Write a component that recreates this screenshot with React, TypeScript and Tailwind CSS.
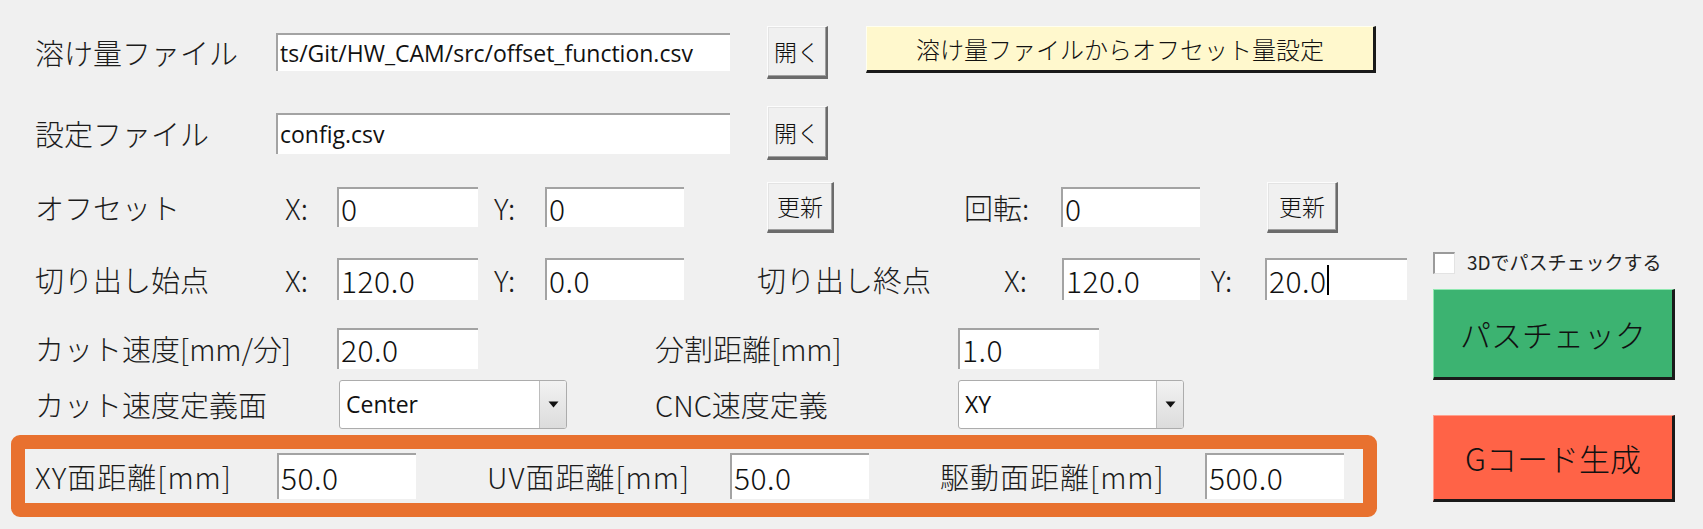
import React from "react";

const JP = { fontFamily: '"Noto Sans CJK JP", "Noto Sans", sans-serif' };
const UI = { fontFamily: '"Open Sans", "Noto Sans CJK JP", sans-serif' };

function Label({ children, className = "" }: { children: React.ReactNode; className?: string }) {
  return (
    <div className={`shrink-0 text-[29px] leading-none text-[#1c1c1c] whitespace-nowrap font-light ${className}`} style={JP}>
      {children}
    </div>
  );
}

function Field({
  value,
  className = "",
  ui = false,
  caret = false,
}: {
  value: string;
  className?: string;
  ui?: boolean;
  caret?: boolean;
}) {
  return (
    <div
      className={`shrink-0 bg-white border-t-2 border-l-2 border-t-[#a3a3a3] border-l-[#a3a3a3] flex items-center pl-[2px] whitespace-nowrap text-[#111] ${
        ui ? "text-[23px]" : "text-[30px] font-light tracking-[0.5px]"
      } ${className}`}
      style={ui ? UI : JP}
    >
      <span className="leading-[1.15]">{value}</span>
      {caret && <span className="inline-block w-[2px] h-[30px] bg-black" />}
    </div>
  );
}

function Btn({ children, className = "" }: { children: React.ReactNode; className?: string }) {
  return (
    <div
      className={`shrink-0 bg-[#f0f0f0] border-t border-l border-t-[#fcfcfc] border-l-[#fcfcfc] border-r-2 border-b-[3px] border-r-[#6b6b6b] border-b-[#6b6b6b] shadow-[inset_-1px_-1px_0_#a0a0a0,inset_1px_1px_0_#e3e3e3] flex items-center justify-center text-[23px] text-[#111] leading-none font-light ${className}`}
      style={JP}
    >
      {children}
    </div>
  );
}

function Select({ value, className = "" }: { value: string; className?: string }) {
  return (
    <div
      className={`shrink-0 bg-white border border-[#acacac] rounded-[3px] flex items-stretch ${className}`}
    >
      <div className="flex-1 flex items-center pl-[6px] text-[23px] text-[#111] leading-[1.2]" style={UI}>
        {value}
      </div>
      <div className="w-[27px] border-l border-[#bdbdbd] rounded-r-[2px] bg-gradient-to-b from-[#f2f2f2] to-[#dcdcdc] flex items-center justify-center">
        <svg width="11" height="7" viewBox="0 0 11 7">
          <path d="M0.5 0.5 H10.5 L5.5 6.5 Z" fill="#111" />
        </svg>
      </div>
    </div>
  );
}

export default function App() {
  return (
    <div className="w-[1703px] h-[529px] bg-[#f0f0f0] flex overflow-hidden">
      {/* left column */}
      <div className="w-[1420px] shrink-0 flex flex-col pt-[25px]">
        {/* row 1 */}
        <div className="flex items-center h-[54px]">
          <Label className="ml-[35px] w-[241px]">溶け量ファイル</Label>
          <Field ui value="ts/Git/HW_CAM/src/offset_function.csv" className="w-[454px] h-[38px]" />
          <Btn className="ml-[37px] w-[61px] h-[53px]">開く</Btn>
          <div
            className="ml-[38px] self-start mt-[1px] w-[510px] h-[47px] bg-[#fff8cd] border-t border-l border-t-[#fffff0] border-l-[#fffff0] border-r-[3px] border-b-[3px] border-r-[#1a1a1a] border-b-[#1a1a1a] flex items-center justify-center text-[24px] leading-none text-[#111] font-light"
            style={JP}
          >
            溶け量ファイルからオフセット量設定
          </div>
        </div>

        {/* row 2 */}
        <div className="flex items-center h-[54px] mt-[27px]">
          <Label className="ml-[35px] w-[241px]">設定ファイル</Label>
          <Field ui value="config.csv" className="w-[454px] h-[41px]" />
          <Btn className="ml-[37px] w-[61px] h-[54px]">開く</Btn>
        </div>

        {/* row 3 */}
        <div className="flex items-center h-[52px] mt-[21px]">
          <Label className="ml-[35px] w-[250px]">オフセット</Label>
          <Label className="w-[52px]">X:</Label>
          <Field value="0" className="w-[141px] h-[40px]" />
          <Label className="ml-[16px] w-[51px]">Y:</Label>
          <Field value="0" className="w-[139px] h-[40px]" />
          <Btn className="ml-[83px] w-[67px] h-[51px] text-[21px]">更新</Btn>
          <Label className="ml-[130px] w-[97px]">回転:</Label>
          <Field value="0" className="w-[139px] h-[40px]" />
          <Btn className="ml-[67px] w-[71px] h-[51px] text-[21px]">更新</Btn>
        </div>

        {/* row 4 */}
        <div className="flex items-center h-[42px] mt-[25px]">
          <Label className="ml-[35px] w-[250px]">切り出し始点</Label>
          <Label className="w-[52px]">X:</Label>
          <Field value="120.0" className="w-[141px] h-[42px]" />
          <Label className="ml-[16px] w-[51px]">Y:</Label>
          <Field value="0.0" className="w-[139px] h-[42px]" />
          <Label className="ml-[73px] w-[247px]">切り出し終点</Label>
          <Label className="w-[58px]">X:</Label>
          <Field value="120.0" className="w-[138px] h-[42px]" />
          <Label className="ml-[11px] w-[54px]">Y:</Label>
          <Field value="20.0" caret className="w-[142px] h-[42px]" />
        </div>

        {/* row 5 */}
        <div className="flex items-center h-[41px] mt-[28px]">
          <Label className="ml-[35px] w-[302px]">カット速度[mm/分]</Label>
          <Field value="20.0" className="w-[141px] h-[41px]" />
          <Label className="ml-[177px] w-[303px]">分割距離[mm]</Label>
          <Field value="1.0" className="w-[141px] h-[41px]" />
        </div>

        {/* row 6 */}
        <div className="flex items-center h-[49px] mt-[11px]">
          <Label className="ml-[35px] w-[304px]">カット速度定義面</Label>
          <Select value="Center" className="w-[228px] h-[49px]" />
          <Label className="ml-[88px] w-[303px]">CNC速度定義</Label>
          <Select value="XY" className="w-[226px] h-[49px]" />
        </div>

        {/* orange box */}
        <div className="ml-[11px] mt-[6px] w-[1366px] h-[82px] border-[14px] border-[#e8712f] rounded-[9px] flex items-center">
          <Label className="ml-[10px] w-[242px] tracking-[1px]">XY面距離[mm]</Label>
          <Field value="50.0" className="w-[139px] h-[46px]" />
          <Label className="ml-[71px] w-[243px] tracking-[1px]">UV面距離[mm]</Label>
          <Field value="50.0" className="w-[139px] h-[46px]" />
          <Label className="ml-[71px] w-[265px] tracking-[1px]">駆動面距離[mm]</Label>
          <Field value="500.0" className="w-[139px] h-[46px]" />
        </div>
      </div>

      {/* right column */}
      <div className="ml-[13px] flex flex-col pt-[251px] w-[245px] shrink-0">
        <div className="flex items-center h-[23px]">
          <div className="w-[22px] h-[22px] bg-white border-t-2 border-l-2 border-t-[#9a9a9a] border-l-[#9a9a9a] border-r border-b border-r-[#e3e3e3] border-b-[#e3e3e3]" />
          <div className="ml-[12px] text-[19px] leading-[1.2] text-[#222] whitespace-nowrap" style={JP}>
            3Dでパスチェックする
          </div>
        </div>
        <div
          className="mt-[15px] w-[242px] h-[91px] bg-[#3cb371] border-t border-l border-t-[#8fe8b0] border-l-[#8fe8b0] border-r-[3px] border-b-[3px] border-r-[#1a1a1a] border-b-[#1a1a1a] flex items-center justify-center text-[31px] leading-none text-[#111] font-light"
          style={JP}
        >
          パスチェック
        </div>
        <div
          className="mt-[35px] w-[242px] h-[87px] bg-[#ff6347] border-t border-l border-t-[#ffa08e] border-l-[#ffa08e] border-r-[3px] border-b-[3px] border-r-[#1a1a1a] border-b-[#1a1a1a] flex items-center justify-center text-[31px] leading-none text-[#111] font-light"
          style={JP}
        >
          Gコード生成
        </div>
      </div>
    </div>
  );
}
